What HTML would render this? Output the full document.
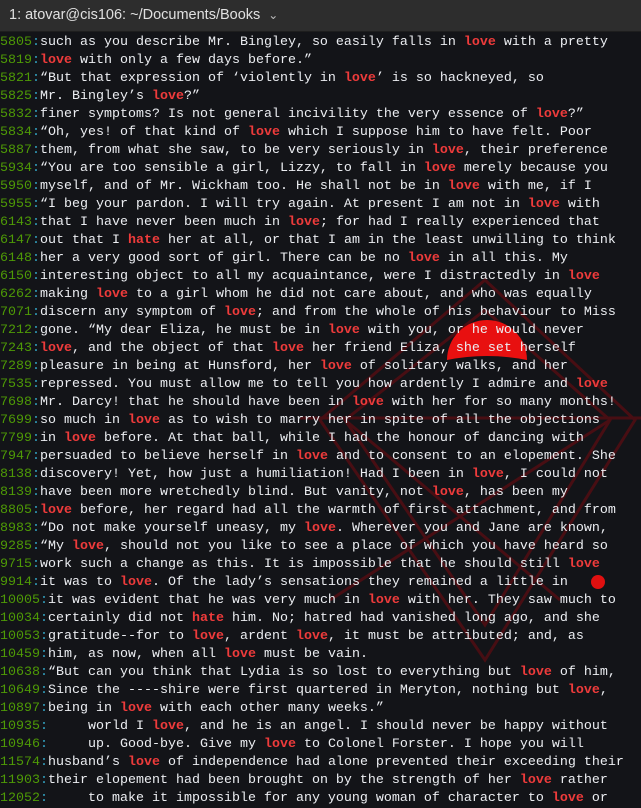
<!DOCTYPE html>
<html><head><meta charset="utf-8"><style>
html,body{margin:0;padding:0;width:641px;height:807px;overflow:hidden;background:#131418}
.bar{height:32px;background:#2d2d2d;color:#e0e0e0;font:14.5px "Liberation Sans","DejaVu Sans",sans-serif;line-height:30px;padding-left:9px;box-sizing:border-box;border-bottom:1px solid #1e1e1e}
.bar span{font-size:12px;margin-left:8px;color:#bbb}
.bg{position:absolute;left:0;top:32px}
pre{position:absolute;left:0;top:34px;margin:0;font:13.33px "Liberation Mono","DejaVu Sans Mono",monospace;line-height:18px;color:#eceef2;white-space:pre}
i{font-style:normal;color:#4e9a06}
u{text-decoration:none;color:#34a4c4}
b{color:#ef3b3b}
</style></head><body>
<div class="bar">1: atovar@cis106: ~/Documents/Books<span>&#8964;</span></div>
<svg class="bg" width="641" height="775" viewBox="0 32 641 775">
<g stroke="#5a0c12" stroke-width="3" fill="none" opacity="0.75">
<polygon points="485,280 635,420 485,660 320,420"/>
<polygon points="485,310 610,420 485,625 345,420"/>
<line x1="300" y1="418" x2="641" y2="418"/>
<line x1="330" y1="600" x2="610" y2="420"/>
<line x1="345" y1="420" x2="560" y2="600"/>
</g>
<path d="M447,360 A40,40 0 1 1 527,360 Q487,352 447,360 Z" fill="#e81010"/>
<circle cx="598" cy="582" r="7" fill="#e01010"/>
</svg>
<pre><i>5805</i><u>:</u>such as you describe Mr. Bingley, so easily falls in <b>love</b> with a pretty
<i>5819</i><u>:</u><b>love</b> with only a few days before.”
<i>5821</i><u>:</u>“But that expression of ‘violently in <b>love</b>’ is so hackneyed, so
<i>5825</i><u>:</u>Mr. Bingley’s <b>love</b>?”
<i>5832</i><u>:</u>finer symptoms? Is not general incivility the very essence of <b>love</b>?”
<i>5834</i><u>:</u>“Oh, yes! of that kind of <b>love</b> which I suppose him to have felt. Poor
<i>5887</i><u>:</u>them, from what she saw, to be very seriously in <b>love</b>, their preference
<i>5934</i><u>:</u>“You are too sensible a girl, Lizzy, to fall in <b>love</b> merely because you
<i>5950</i><u>:</u>myself, and of Mr. Wickham too. He shall not be in <b>love</b> with me, if I
<i>5955</i><u>:</u>“I beg your pardon. I will try again. At present I am not in <b>love</b> with
<i>6143</i><u>:</u>that I have never been much in <b>love</b>; for had I really experienced that
<i>6147</i><u>:</u>out that I <b>hate</b> her at all, or that I am in the least unwilling to think
<i>6148</i><u>:</u>her a very good sort of girl. There can be no <b>love</b> in all this. My
<i>6150</i><u>:</u>interesting object to all my acquaintance, were I distractedly in <b>love</b>
<i>6262</i><u>:</u>making <b>love</b> to a girl whom he did not care about, and who was equally
<i>7071</i><u>:</u>discern any symptom of <b>love</b>; and from the whole of his behaviour to Miss
<i>7212</i><u>:</u>gone. “My dear Eliza, he must be in <b>love</b> with you, or he would never
<i>7243</i><u>:</u><b>love</b>, and the object of that <b>love</b> her friend Eliza, she set herself
<i>7289</i><u>:</u>pleasure in being at Hunsford, her <b>love</b> of solitary walks, and her
<i>7535</i><u>:</u>repressed. You must allow me to tell you how ardently I admire and <b>love</b>
<i>7698</i><u>:</u>Mr. Darcy! that he should have been in <b>love</b> with her for so many months!
<i>7699</i><u>:</u>so much in <b>love</b> as to wish to marry her in spite of all the objections
<i>7799</i><u>:</u>in <b>love</b> before. At that ball, while I had the honour of dancing with
<i>7947</i><u>:</u>persuaded to believe herself in <b>love</b> and to consent to an elopement. She
<i>8138</i><u>:</u>discovery! Yet, how just a humiliation! Had I been in <b>love</b>, I could not
<i>8139</i><u>:</u>have been more wretchedly blind. But vanity, not <b>love</b>, has been my
<i>8805</i><u>:</u><b>love</b> before, her regard had all the warmth of first attachment, and from
<i>8983</i><u>:</u>“Do not make yourself uneasy, my <b>love</b>. Wherever you and Jane are known,
<i>9285</i><u>:</u>“My <b>love</b>, should not you like to see a place of which you have heard so
<i>9715</i><u>:</u>work such a change as this. It is impossible that he should still <b>love</b>
<i>9914</i><u>:</u>it was to <b>love</b>. Of the lady’s sensations they remained a little in
<i>10005</i><u>:</u>it was evident that he was very much in <b>love</b> with her. They saw much to
<i>10034</i><u>:</u>certainly did not <b>hate</b> him. No; hatred had vanished long ago, and she
<i>10053</i><u>:</u>gratitude--for to <b>love</b>, ardent <b>love</b>, it must be attributed; and, as
<i>10459</i><u>:</u>him, as now, when all <b>love</b> must be vain.
<i>10638</i><u>:</u>“But can you think that Lydia is so lost to everything but <b>love</b> of him,
<i>10649</i><u>:</u>Since the ----shire were first quartered in Meryton, nothing but <b>love</b>,
<i>10897</i><u>:</u>being in <b>love</b> with each other many weeks.”
<i>10935</i><u>:</u>     world I <b>love</b>, and he is an angel. I should never be happy without
<i>10946</i><u>:</u>     up. Good-bye. Give my <b>love</b> to Colonel Forster. I hope you will
<i>11574</i><u>:</u>husband’s <b>love</b> of independence had alone prevented their exceeding their
<i>11903</i><u>:</u>their elopement had been brought on by the strength of her <b>love</b> rather
<i>12052</i><u>:</u>     to make it impossible for any young woman of character to <b>love</b> or</pre>
</body></html>
